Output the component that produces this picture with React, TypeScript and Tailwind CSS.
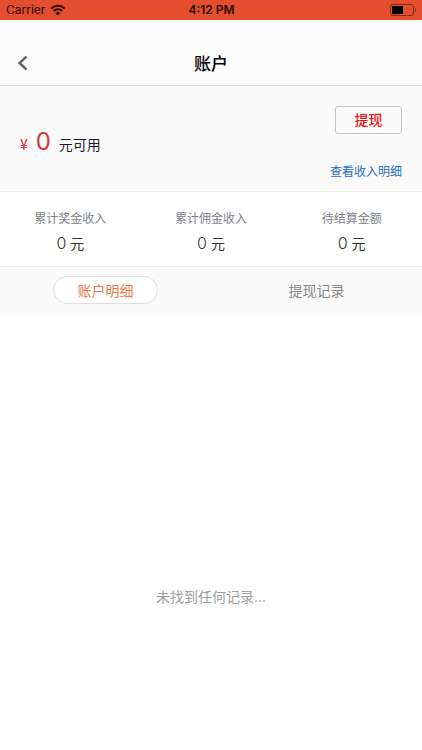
interface Stat {
  label: string;
  value: number;
}

const STATS: Stat[] = [
  { label: '累计奖金收入', value: 0 },
  { label: '累计佣金收入', value: 0 },
  { label: '待结算金额', value: 0 },
];

function WifiIcon() {
  return (
    <svg width="16" height="12" viewBox="0 0 14 11" fill="none" aria-hidden="true">
      <path d="M0.9 4.1a8.7 8.7 0 0 1 12.2 0" stroke="#2a0904" strokeWidth="1.9" />
      <path d="M3.1 6.4a5.6 5.6 0 0 1 7.8 0" stroke="#2a0904" strokeWidth="1.8" />
      <path d="M4.8 8.3a3.1 3.1 0 0 1 4.4 0L7 10.6z" fill="#2a0904" />
    </svg>
  );
}

function BatteryIcon() {
  return (
    <svg width="27" height="12" viewBox="0 0 27 12" fill="none" aria-hidden="true">
      <rect x="0.5" y="0.5" width="23" height="11" rx="2.5" stroke="#8a2a18" />
      <rect x="2" y="2" width="11" height="8" rx="0.5" fill="#000" />
      <path d="M25 4c1.4.3 1.4 3.7 0 4z" fill="#8a2a18" />
    </svg>
  );
}

function StatusBar() {
  return (
    <div className="grid h-5 grid-cols-3 items-center bg-[#e44d2e] pl-[6px] pr-[5px] text-[12px] leading-5 text-[#2a0904]">
      <div className="flex items-center gap-[5px]">
        <span>Carrier</span>
        <WifiIcon />
      </div>
      <span className="text-center font-semibold">4:12 PM</span>
      <div className="flex justify-end">
        <BatteryIcon />
      </div>
    </div>
  );
}

function Header() {
  return (
    <header className="grid h-[66px] grid-cols-3 items-center border-b border-[#dcdcdc] bg-[#fbfbfb] px-4 pt-[22px]">
      <button type="button" aria-label="返回" className="w-6">
        <svg width="12" height="16" viewBox="0 0 12 16" fill="none">
          <path d="M10.5 .5 3.5 7l7 6.5" stroke="#666" strokeWidth="2.4" />
        </svg>
      </button>
      <h1 className="text-center text-[17px] font-medium leading-6 text-black">账户</h1>
    </header>
  );
}

function Balance() {
  return (
    <section className="flex h-[106px] items-center justify-between border-b border-[#ebebeb] bg-[#fafafa] px-5 pt-[10px]">
      <p className="flex items-baseline text-[14px] leading-8 text-[#1c1c2b]">
        <span className="text-[#d8373a]">¥</span>
        <span className="ml-2 mr-2 text-[24px] text-[#d8373a]">0</span>
        元可用
      </p>
      <div className="flex flex-col items-end gap-7">
        <button
          type="button"
          className="h-7 w-[67px] rounded-[3px] border border-[#c3c3d0] text-[14px] font-medium leading-5 text-[#f01414]"
        >
          提现
        </button>
        <a href="#income" className="text-[12px] leading-5 text-[#2470c2]">
          查看收入明细
        </a>
      </div>
    </section>
  );
}

function Stats() {
  return (
    <dl className="grid h-[75px] grid-cols-3 content-center border-b border-[#ebebeb] bg-white pt-1 text-center">
      {STATS.map((stat) => (
        <div key={stat.label}>
          <dt className="text-[12px] leading-6 text-[#7d8288]">{stat.label}</dt>
          <dd className="text-[14px] leading-6 text-[#333]">
            <span className="text-[16px] font-light">{stat.value}</span> 元
          </dd>
        </div>
      ))}
    </dl>
  );
}

function Tabs() {
  return (
    <nav className="grid h-[46px] grid-cols-2 items-center justify-items-center bg-[#fafafa] text-[14px] leading-5">
      <button
        type="button"
        className="h-7 w-[105px] rounded-full border border-[#dedede] bg-white pt-[2px] text-[#ea7c4c]"
      >
        账户明细
      </button>
      <button type="button" className="h-7 w-[105px] pt-[2px] text-[#888]">
        提现记录
      </button>
    </nav>
  );
}

export default function App() {
  return (
    <div className="flex min-h-screen flex-col overflow-hidden bg-[#fefefe] font-['Inter','Noto_Sans_CJK_SC',sans-serif]">
      <StatusBar />
      <Header />
      <Balance />
      <Stats />
      <Tabs />
      <main className="flex flex-1 items-center justify-center pt-[130px]">
        <p className="text-[14px] leading-5 text-[#a0a0a0]">未找到任何记录...</p>
      </main>
    </div>
  );
}
